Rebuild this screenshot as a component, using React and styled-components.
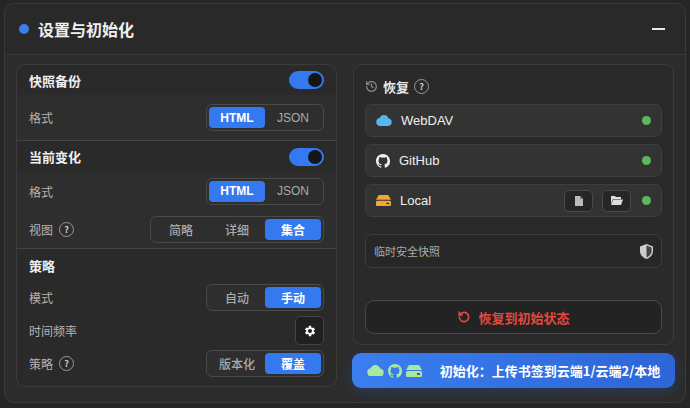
import React from "react";
import styled, { createGlobalStyle } from "styled-components";

const G = createGlobalStyle`
  html,body{margin:0;padding:0;background:#262626;}
  body{font-family:"Noto Sans CJK SC","Liberation Sans",sans-serif;color:#e8e8e8;}
`;
const Panel = styled.div`
  margin:3px 4px; width:682px; height:400px; box-sizing:border-box;
  background:#2c2c2c; border:1px solid #3a3a3a; border-radius:10px; overflow:hidden;
  display:flex; flex-direction:column;
`;
const Header = styled.div`
  height:50px; flex:none; background:#292929; border-bottom:1px solid #3b3b3b;
  display:flex; align-items:center; padding:0 14px 0 14px; gap:9px;
`;
const Dot = styled.span`width:10px;height:10px;border-radius:50%;background:${p=>p.c};display:inline-block;flex:none;`;
const Title = styled.div`font-size:16px;font-weight:600;flex:1;color:#f0f0f0;`;
const Minus = styled.div`width:13px;height:2px;background:#e8e8e8;margin-right:6px;`;
const Body = styled.div`display:flex;gap:16px;padding:9px 11px 0 11px;`;
const Card = styled.div`
  width:321px; height:323px; box-sizing:border-box; background:#2a2a2a;
  border:1px solid #3c3c3c; border-radius:9px; overflow:hidden; display:flex; flex-direction:column;
`;
const SecHead = styled.div`
  height:${p=>p.h||30}px; display:flex; align-items:center; justify-content:space-between;
  padding:0 12px; font-size:13px; font-weight:700; color:#f0f0f0;
  ${p=>p.divider&&"border-top:1px solid #444;"} background:${p=>p.bg||"transparent"};
`;
const Row = styled.div`
  height:${p=>p.h||36}px; display:flex; align-items:center; justify-content:space-between;
  padding:0 12px; font-size:12px; color:#b4b4b4; background:${p=>p.bg||"transparent"};
`;
const Lab = styled.div`display:flex;align-items:center;gap:6px;`;
const Help = styled.span`
  width:13px;height:13px;border:1px solid #999;border-radius:50%;font-size:9px;color:#ccc;
  display:inline-flex;align-items:center;justify-content:center;font-weight:600;
`;
const Toggle = styled.div`
  width:35px;height:18px;border-radius:9px;background:#3479ef;position:relative;
  &::after{content:"";position:absolute;right:2px;top:2px;width:14px;height:14px;border-radius:50%;background:#151515;}
`;
const Seg = styled.div`
  display:flex; padding:2px; border:1px solid #4a4a4a; border-radius:6px; background:#2e2e2e; gap:0;
`;
const SegBtn = styled.div`
  width:56px; height:21px; border-radius:4px; display:flex; align-items:center; justify-content:center;
  font-size:12px; font-weight:${p=>p.on?700:500}; color:${p=>p.on?"#fff":"#aaa"};
  background:${p=>p.on?"#3479ef":"transparent"}; font-family:"Liberation Sans","Noto Sans CJK SC",sans-serif;
`;
const IconBtn = styled.div`
  width:27px;height:27px;border:1px solid #444;border-radius:5px;background:#202020;
  display:flex;align-items:center;justify-content:center;
`;
const Right = styled.div`display:flex;flex-direction:column;gap:8px;`;
const RCard = styled(Card)`height:281px;padding:10px 11px 10px;gap:7px;`;
const RTitle = styled.div`display:flex;align-items:center;gap:5px;font-size:13px;font-weight:700;height:22px;`;
const Item = styled.div`
  height:33px;box-sizing:border-box;border:1px solid #3e3e3e;border-radius:7px;background:#333;
  display:flex;align-items:center;padding:0 10px;gap:9px;font-size:13px;color:#f0f0f0;
  font-family:"Liberation Sans",sans-serif;
`;
const Name = styled.div`flex:1;`;
const Green = styled.span`width:9px;height:9px;border-radius:50%;background:#5cb85c;margin-left:2px;`;
const SmallBtn = styled.div`
  width:27px;height:20px;border:1px solid #4a4a4a;border-radius:5px;background:#262626;
  display:flex;align-items:center;justify-content:center;
`;
const Temp = styled.div`
  margin-top:10px;height:34px;box-sizing:border-box;border:1px solid #3e3e3e;border-radius:7px;background:#272727;
  display:flex;align-items:center;justify-content:space-between;padding:0 8px;font-size:11px;color:#aaa;
`;
const Restore = styled.div`
  margin-top:auto;height:34px;box-sizing:border-box;border:1px solid #4a4a4a;border-radius:9px;background:#232323;
  display:flex;align-items:center;justify-content:center;gap:7px;color:#e5483b;font-size:13px;font-weight:600;
`;
const Init = styled.div`
  height:35px;margin:0 -1px;border-radius:9px;background:linear-gradient(90deg,#3a7ef0,#2d66d6);
  display:flex;align-items:center;justify-content:center;gap:4px;color:#fff;font-size:13px;font-weight:700;
  box-shadow:0 4px 12px rgba(40,100,220,.25);
`;
const Gap = styled.span`width:10px;`;

const Cloud = ({c,s=16}) => (
  <svg width={s} height={s*0.7} viewBox="0 0 24 16"><path fill={c} d="M6 16a6 6 0 0 1-.6-11.9A7 7 0 0 1 18.5 4.5 5.8 5.8 0 0 1 18.5 16z"/></svg>
);
const Gh = ({c,s=14}) => (
  <svg width={s} height={s} viewBox="0 0 16 16"><path fill={c} d="M8 0C3.58 0 0 3.58 0 8c0 3.54 2.29 6.53 5.47 7.59.4.07.55-.17.55-.38v-1.330c-2.23.48-2.7-1.07-2.7-1.07-.36-.92-.89-1.170-.89-1.17-.73-.5.05-.49.05-.49.8.06 1.23.83 1.23.83.72 1.22 1.87.87 2.33.67.07-.52.28-.87.5-1.07-1.78-.2-3.64-.89-3.64-3.95 0-.87.31-1.59.83-2.15-.08-.2-.36-1.02.08-2.12 0 0 .67-.21 2.2.82a7.6 7.6 0 0 1 4 0c1.53-1.04 2.2-.82 2.2-.82.44 1.1.16 1.92.08 2.12.51.56.82 1.27.82 2.15 0 3.07-1.87 3.75-3.65 3.95.29.25.54.73.54 1.48v2.2c0 .21.15.46.55.38A8.01 8.01 0 0 0 16 8c0-4.42-3.58-8-8-8z"/></svg>
);
const Drive = ({c,s=16}) => (
  <svg width={s} height={s*0.75} viewBox="0 0 16 12"><path fill={c} d="M3 0h10l3 5H0z"/><rect fill={c} x="0" y="6" width="16" height="6" rx="1.5"/><rect x="11" y="8.3" width="3" height="1.4" fill="#2a2a2a"/></svg>
);

export default function App(){
  return (<>
    <G/>
    <Panel>
      <Header><Dot c="#3a7ff0"/><Title>设置与初始化</Title><Minus/></Header>
      <Body>
        <Card>
          <SecHead h={30}>快照备份<Toggle/></SecHead>
          <Row h={45} bg="#2e2e2e">格式<Seg><SegBtn on>HTML</SegBtn><SegBtn>JSON</SegBtn></Seg></Row>
          <SecHead divider h={31}>当前变化<Toggle/></SecHead>
          <Row h={38} bg="#2e2e2e">格式<Seg><SegBtn on>HTML</SegBtn><SegBtn>JSON</SegBtn></Seg></Row>
          <Row h={38} bg="#2e2e2e"><Lab>视图<Help>?</Help></Lab><Seg><SegBtn>简略</SegBtn><SegBtn>详细</SegBtn><SegBtn on>集合</SegBtn></Seg></Row>
          <SecHead divider h={32}>策略</SecHead>
          <Row h={33}>模式<Seg><SegBtn>自动</SegBtn><SegBtn on>手动</SegBtn></Seg></Row>
          <Row h={33}>时间频率<IconBtn>
            <svg width="14" height="14" viewBox="0 0 24 24"><path fill="#fff" d="M19.4 13a7.5 7.5 0 0 0 0-2l2.1-1.6-2-3.5-2.5 1a7 7 0 0 0-1.7-1L15 3h-4l-.4 2.9a7 7 0 0 0-1.7 1l-2.5-1-2 3.5L6.6 11a7.5 7.5 0 0 0 0 2l-2.1 1.6 2 3.5 2.5-1a7 7 0 0 0 1.7 1L11 21h4l.4-2.9a7 7 0 0 0 1.7-1l2.5 1 2-3.5zM13 15.5a3.5 3.5 0 1 1 0-7 3.5 3.5 0 0 1 0 7z" transform="translate(-1 0)"/></svg>
          </IconBtn></Row>
          <Row h={33}><Lab>策略<Help>?</Help></Lab><Seg><SegBtn>版本化</SegBtn><SegBtn on>覆盖</SegBtn></Seg></Row>
        </Card>
        <Right>
          <RCard>
            <RTitle>
              <svg width="13" height="13" viewBox="0 0 24 24" fill="none" stroke="#888" strokeWidth="2.4" strokeLinecap="round"><path d="M3 12a9 9 0 1 0 3-6.7L3 8"/><path d="M3 3v5h5"/><path d="M12 7v5l3 2"/></svg>
              恢复<Help>?</Help>
            </RTitle>
            <Item><Cloud c="#5ab4ef"/><Name>WebDAV</Name><Green/></Item>
            <Item><Gh c="#f0f0f0"/><Name>GitHub</Name><Green/></Item>
            <Item><Drive c="#f0a73a" s={15}/><Name>Local</Name>
              <SmallBtn><svg width="8" height="10" viewBox="0 0 8 10"><path fill="#bbb" d="M0 0h5l3 3v7H0z"/><path d="M5 0v3h3" fill="#777"/></svg></SmallBtn>
              <SmallBtn><svg width="12" height="9" viewBox="0 0 12 9"><path fill="#ddd" d="M0 0h4l1 1h5v2H2L0 8z"/><path fill="#ddd" d="M2.3 3.6H12L10 9H0z"/></svg></SmallBtn>
              <Green/></Item>
            <Temp>临时安全快照
              <svg width="13" height="15" viewBox="0 0 13 15"><path d="M6.5 0L13 2.5V7c0 4-3 6.8-6.5 8C3 13.8 0 11 0 7V2.5z" fill="#ccc"/><path d="M6.5 1.6V13.4C9.4 12.2 11.6 9.8 11.6 7V3.4z" fill="#444"/></svg>
            </Temp>
            <Restore>
              <svg width="14" height="14" viewBox="0 0 24 24" fill="none" stroke="#e5483b" strokeWidth="2.8" strokeLinecap="round"><path d="M4 12a8 8 0 1 0 2.5-5.8L4 8.5"/><path d="M4 3.5v5h5"/></svg>
              恢复到初始状态
            </Restore>
          </RCard>
          <Init><Cloud c="#a6e8a0" s={17}/><Gh c="#a6e8a0" s={14}/><Drive c="#a6e8a0" s={16}/><Gap/>初始化：上传书签到云端1/云端2/本地</Init>
        </Right>
      </Body>
    </Panel>
  </>);
}
